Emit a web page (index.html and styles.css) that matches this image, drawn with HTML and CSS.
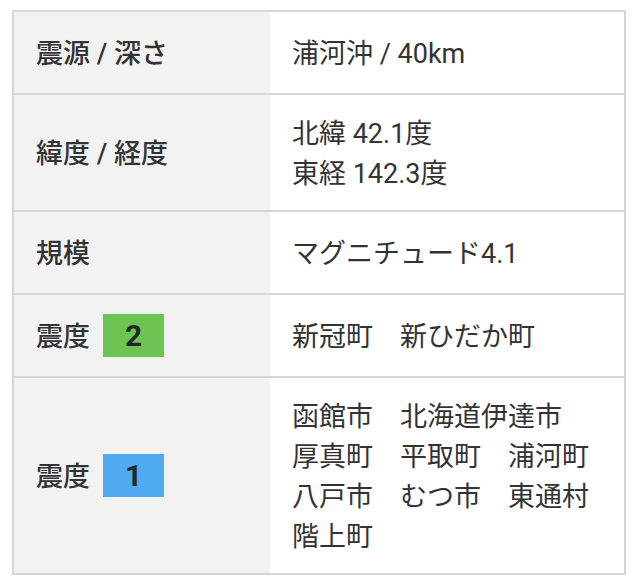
FILE: index.html
```html
<!DOCTYPE html>
<html lang="ja">
<head>
<meta charset="utf-8">
<link rel="stylesheet" href="styles.css">
</head>
<body>
<table class="quake">
  <tbody>
    <tr class="single">
      <th class="label">震源 / 深さ</th>
      <td class="value">浦河沖 / 40km</td>
    </tr>
    <tr>
      <th class="label">緯度 / 経度</th>
      <td class="value">北緯 42.1度<br>東経 142.3度</td>
    </tr>
    <tr class="single">
      <th class="label">規模</th>
      <td class="value">マグニチュード4.1</td>
    </tr>
    <tr class="single">
      <th class="label"><div class="lab"><span>震度</span><span class="badge badge-2">2</span></div></th>
      <td class="value">新冠町　新ひだか町</td>
    </tr>
    <tr class="last">
      <th class="label"><div class="lab"><span>震度</span><span class="badge badge-1">1</span></div></th>
      <td class="value">函館市　北海道伊達市<br>厚真町　平取町　浦河町<br>八戸市　むつ市　東通村<br>階上町</td>
    </tr>
  </tbody>
</table>
</body>
</html>
```
FILE: styles.css
```css
html, body {
  margin: 0;
  padding: 0;
  background: #ffffff;
}
body {
  font-family: Roboto, "Noto Sans CJK JP", sans-serif;
  color: #333333;
}
.quake {
  margin: 10px 0 0 12px;
  width: 614px;
  border: 2px solid #d6d6d6;
  border-spacing: 0;
  table-layout: fixed;
  box-sizing: border-box;
}
.quake th, .quake td {
  box-sizing: border-box;
  border-bottom: 2px solid #d6d6d6;
  padding: 19px 22px 16px;
  font-size: 27px;
  line-height: 40px;
  vertical-align: middle;
  text-align: left;
}
.quake tr.last th, .quake tr.last td {
  border-bottom: none;
}
.quake tr.single th, .quake tr.single td {
  height: 83px;
}
.label {
  width: 256px;
  background: #f2f2f2;
  font-weight: 500;
  color: #333333;
}
.value {
  background: #ffffff;
  font-weight: 400;
  color: #333333;
}
.lab {
  display: flex;
  align-items: center;
}
.badge {
  display: inline-flex;
  align-items: center;
  justify-content: center;
  width: 61px;
  height: 43px;
  margin: -4px 0 0 13px;
  font-size: 30px;
  line-height: 43px;
  font-weight: 700;
  color: #222a22;
}
.badge-2 {
  background: #6cc552;
}
.badge-1 {
  background: #4faaf0;
}
```
